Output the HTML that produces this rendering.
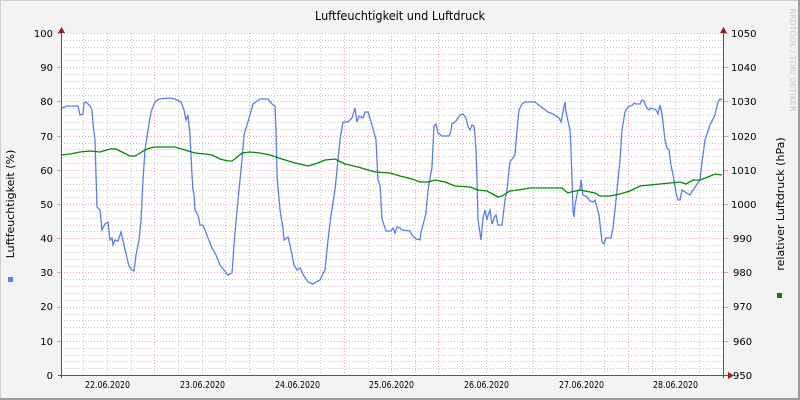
<!DOCTYPE html>
<html><head><meta charset="utf-8"><style>
html,body{margin:0;padding:0;background:#f3f3f3}
svg{display:block;font-family:"DejaVu Sans","Liberation Sans",sans-serif}
</style></head><body>
<svg width="800" height="400" viewBox="0 0 800 400" xmlns="http://www.w3.org/2000/svg">
<rect x="0" y="0" width="800" height="400" fill="#f3f3f3"/>
<rect x="0.5" y="0.5" width="799" height="399" fill="none" stroke="#cfcfcf"/>
<rect x="798" y="0" width="2" height="400" fill="#9c9c9c"/>
<rect x="0" y="398" width="800" height="2" fill="#9c9c9c"/>
<rect x="61" y="33" width="663" height="342" fill="#fff"/>
<g stroke="#c8c8c8" stroke-dasharray="1,2" stroke-width="1" shape-rendering="crispEdges">
<path d="M61 40.5H724M61 47.5H724M61 54.5H724M61 60.5H724M61 74.5H724M61 81.5H724M61 88.5H724M61 95.5H724M61 108.5H724M61 115.5H724M61 122.5H724M61 129.5H724M61 143.5H724M61 149.5H724M61 156.5H724M61 163.5H724M61 177.5H724M61 184.5H724M61 190.5H724M61 197.5H724M61 211.5H724M61 218.5H724M61 225.5H724M61 231.5H724M61 245.5H724M61 252.5H724M61 259.5H724M61 266.5H724M61 279.5H724M61 286.5H724M61 293.5H724M61 300.5H724M61 314.5H724M61 320.5H724M61 327.5H724M61 334.5H724M61 348.5H724M61 355.5H724M61 361.5H724M61 368.5H724"/>
<path d="M83.5 33V375M107.5 33V375M131.5 33V375M178.5 33V375M202.5 33V375M225.5 33V375M273.5 33V375M297.5 33V375M320.5 33V375M368.5 33V375M391.5 33V375M415.5 33V375M462.5 33V375M486.5 33V375M510.5 33V375M557.5 33V375M581.5 33V375M604.5 33V375M652.5 33V375M675.5 33V375M699.5 33V375"/>
</g>
<g stroke="#e4a8a8" stroke-dasharray="1,2" stroke-width="1" shape-rendering="crispEdges">
<path d="M61 33.5H724M61 67.5H724M61 101.5H724M61 136.5H724M61 170.5H724M61 204.5H724M61 238.5H724M61 272.5H724M61 307.5H724M61 341.5H724"/>
<path d="M154.5 33V375M249.5 33V375M344.5 33V375M438.5 33V375M533.5 33V375M628.5 33V375"/>
</g>
<g stroke="#e0a0a0" shape-rendering="crispEdges"><path d="M57 33.5H61M57 67.5H61M57 101.5H61M57 136.5H61M57 170.5H61M57 204.5H61M57 238.5H61M57 272.5H61M57 307.5H61M57 341.5H61M724 33.5H728M724 67.5H728M724 101.5H728M724 136.5H728M724 170.5H728M724 204.5H728M724 238.5H728M724 272.5H728M724 307.5H728M724 341.5H728"/></g>
<polyline fill="none" stroke="#5a7ee8" stroke-width="1.3" points="61,110 62,108 67,106 78,106 80,115 83,114 84,103 86,102 90,106 92,110 93,124 95,140 96,175 97,207 100,210 102,230 105,224 108,222 110,240 112,238 113,245 115,240 118,241 121,232 124,245 127,258 129,266 132,270 134,271 136,255 139,240 141,220 142,200 143,180 145,150 148,130 151,112 155,102 159,99 169,98 175,99 181,102 184,110 186,120 188,115 190,135 192,175 193,190 194,195 195,210 198,215 200,225 203,225 205,230 208,238 212,248 216,255 220,265 224,270 228,275 232,273 233,260 234,245 236,222 238,200 240,180 242,160 244,135 247,125 250,115 253,104 260,99 268,99 272,104 275,106 276,130 277,175 280,210 283,228 284,240 288,237 290,245 294,265 297,270 300,268 304,276 308,282 313,284 318,281 320,280 325,270 328,240 331,215 335,190 338,160 340,140 343,122 348,122 352,118 355,108 357,122 359,116 363,118 365,112 368,112 372,125 376,140 378,180 380,185 382,219 386,231 391,231 393,228 395,233 397,227 400,228 402,230 410,231 412,235 416,239 420,240 421,232 423,225 426,213 428,190 432,167 434,126 436,124 438,133 442,136 449,136 451,131 452,124 456,121 460,115 463,114 466,118 468,127 470,130 472,125 474,126 475,135 476,150 477,180 478,220 480,233 481,240 483,218 485,210 487,220 488,215 490,210 492,224 495,216 496,215 498,225 502,225 505,200 507,190 509,170 510,162 515,155 517,130 519,110 522,104 525,102 535,102 540,106 548,112 553,114 559,118 561,122 565,102 566,112 570,130 571,150 572,180 573,210 574,217 575,205 578,190 580,190 581,180 583,195 587,197 590,201 593,202 595,200 599,215 602,242 604,244 606,238 611,238 613,228 615,210 618,180 620,160 622,130 625,112 628,107 630,106 633,105 634,103 636,104 640,104 642,100 644,101 645,104 647,108 649,110 651,108 656,110 658,114 660,105 662,114 665,140 667,148 669,150 671,165 674,180 676,193 678,200 680,200 682,190 685,192 690,195 693,190 700,180 702,162 705,140 710,125 715,115 718,102 720,99 722,100"/>
<polyline fill="none" stroke="#008800" stroke-width="1.3" points="61,155 70,154 80,152 90,151 100,152 110,149 116,149 122,152 130,156 135,156 140,153 145,150 150,148 155,147 165,147 175,147 185,150 195,153 205,154 212,155 220,159 228,161 232,161 236,158 242,153 250,152 260,153 270,155 282,159 295,163 308,166 315,164 325,160 335,159 345,164 358,167 375,172 390,173 400,176 412,179 420,182 428,182 435,180 445,182 455,186 470,187 478,190 487,191 498,197 502,196 510,191 518,190 530,188 545,188 562,188 568,193 571,192 580,190 595,193 600,196 610,196 620,194 630,191 640,186 660,184 680,182 686,184 693,180 700,180 708,177 715,174 722,175"/>
<path d="M61.5 30V378M723.5 30V378M58 375.5H728" stroke="#555" stroke-width="1" shape-rendering="crispEdges"/>
<path d="M58 33L61.5 27L65 33Z M720 33L723.5 27L727 33Z M728 372L734 375.5L728 379Z" fill="#a01818"/>
<g font-size="10" fill="#000" text-anchor="end">
<text x="53" y="37">100</text><text x="53" y="71">90</text><text x="53" y="105">80</text><text x="53" y="140">70</text><text x="53" y="174">60</text><text x="53" y="208">50</text><text x="53" y="242">40</text><text x="53" y="276">30</text><text x="53" y="310">20</text><text x="53" y="345">10</text><text x="53" y="379">0</text>
</g>
<g font-size="10" fill="#000" text-anchor="start">
<text x="731" y="37">1050</text><text x="731" y="71">1040</text><text x="731" y="105">1030</text><text x="731" y="140">1020</text><text x="731" y="174">1010</text><text x="731" y="208">1000</text><text x="733" y="242">990</text><text x="733" y="276">980</text><text x="733" y="310">970</text><text x="733" y="345">960</text><text x="733" y="379">950</text>
</g>
<g font-size="10" fill="#000">
<text x="85" y="388" textLength="45" lengthAdjust="spacingAndGlyphs">22.06.2020</text><text x="180" y="388" textLength="45" lengthAdjust="spacingAndGlyphs">23.06.2020</text><text x="275" y="388" textLength="45" lengthAdjust="spacingAndGlyphs">24.06.2020</text><text x="369" y="388" textLength="45" lengthAdjust="spacingAndGlyphs">25.06.2020</text><text x="464" y="388" textLength="45" lengthAdjust="spacingAndGlyphs">26.06.2020</text><text x="559" y="388" textLength="45" lengthAdjust="spacingAndGlyphs">27.06.2020</text><text x="653" y="388" textLength="45" lengthAdjust="spacingAndGlyphs">28.06.2020</text>
</g>
<text x="315" y="20" font-size="12" textLength="170" lengthAdjust="spacingAndGlyphs" fill="#000">Luftfeuchtigkeit und Luftdruck</text>
<text transform="translate(14,204) rotate(-90)" font-size="11" text-anchor="middle" fill="#000">Luftfeuchtigkeit (%)</text>
<text transform="translate(784,204) rotate(-90)" font-size="11" text-anchor="middle" fill="#000">relativer Luftdruck (hPa)</text>
<text transform="translate(790,60) rotate(90)" font-size="8" text-anchor="middle" fill="#c8c8c8">RRDTOOL / TOBI OETIKER</text>
<rect x="8" y="277" width="5" height="5" fill="#5a7ee8"/>
<rect x="777" y="293" width="5" height="5" fill="#008800"/>
</svg>
</body></html>
